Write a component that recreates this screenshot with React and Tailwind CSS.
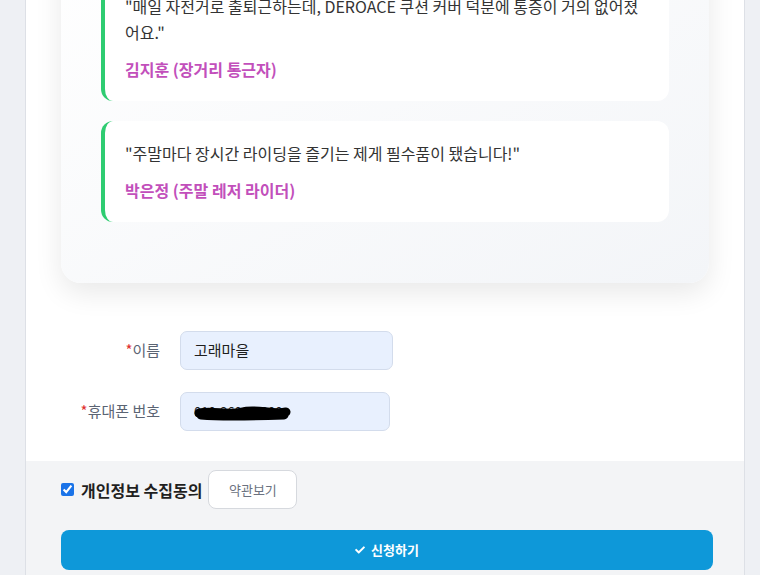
import React from "react";
import { FaCheck } from "react-icons/fa";

const reviews = [
  {
    quote: "\"매일 자전거로 출퇴근하는데, DEROACE 쿠션 커버 덕분에 통증이 거의 없어졌어요.\"",
    name: "김지훈 (장거리 통근자)",
  },
  {
    quote: "\"주말마다 장시간 라이딩을 즐기는 제게 필수품이 됐습니다!\"",
    name: "박은정 (주말 레저 라이더)",
  },
];

function Field({ label, value, width, redacted }) {
  return (
    <div className="flex items-center">
      <label className="w-[134px] text-right text-[15px] text-[#5b6473]">
        <span className="text-[#e0312f]">*</span>
        {label}
      </label>
      <div
        className={`relative ml-[20px] h-[39px] ${width} rounded-[7px] border border-[#d3dcec] bg-[#e8f0fe] px-[13px] flex items-center text-[15px] text-[#1f1f1f]`}
      >
        {redacted ? <span className="text-[13px]">{value}</span> : value}
        {redacted && (
          <svg className="absolute left-[13px] top-[10px]" width="98" height="20" viewBox="0 0 98 20">
            <path
              d="M5 10 C 20 7, 34 13, 48 9 S 78 12, 92 9 M7 12 C 30 14, 60 13, 90 12"
              stroke="#000"
              strokeWidth="9"
              strokeLinecap="round"
              fill="none"
            />
          </svg>
        )}
      </div>
    </div>
  );
}

export default function App() {
  return (
    <div className="min-h-[575px] h-[575px] overflow-hidden bg-[#eef0f4] font-['Noto_Sans_CJK_KR','Noto_Sans',sans-serif]">
      <div className="ml-[25px] w-[720px] h-full border-x border-[#dde0e6] bg-white flex flex-col">
        <div className="px-[35px]">
          <div className="-mt-[66px] rounded-[20px] bg-gradient-to-br from-white to-[#f3f5f8] p-[40px] pb-[41px] shadow-[0_10px_28px_rgba(0,0,0,0.09)]">
            {reviews.map((r) => (
              <div
                key={r.name}
                className="mb-[20px] rounded-[12px] border-l-4 border-[#2ecc71] bg-white px-[20px] py-[19px]"
              >
                <p className="text-[16px] leading-[26px] text-[#333]">{r.quote}</p>
                <p className="mt-[11px] text-[16px] leading-[26px] font-bold text-[#c24fbb]">{r.name}</p>
              </div>
            ))}
          </div>
        </div>

        <div className="mt-[48px] flex flex-col gap-[22px]">
          <Field label="이름" value="고래마을" width="w-[213px]" />
          <Field label="휴대폰 번호" value="010-2600-5000" width="w-[210px]" redacted />
        </div>

        <div className="mt-[30px] flex-1 bg-[#f3f4f6] pt-[9px]">
          <div className="ml-[35px] flex items-center">
            <input type="checkbox" defaultChecked className="h-[13px] w-[13px] accent-[#1a73e8]" />
            <span className="ml-[7px] text-[16px] font-semibold text-[#1f1f1f]">개인정보 수집동의</span>
            <button className="ml-[6px] h-[39px] w-[89px] rounded-[8px] border border-[#d6d9de] bg-white text-[13px] text-[#6b7280]">
              약관보기
            </button>
          </div>
          <button className="mt-[21px] ml-[35px] flex h-[40px] w-[652px] items-center justify-center gap-[6px] rounded-[8px] bg-[#0e98d9] text-[13px] font-bold text-white">
            <FaCheck className="text-[10px]" />
            신청하기
          </button>
        </div>
      </div>
    </div>
  );
}
